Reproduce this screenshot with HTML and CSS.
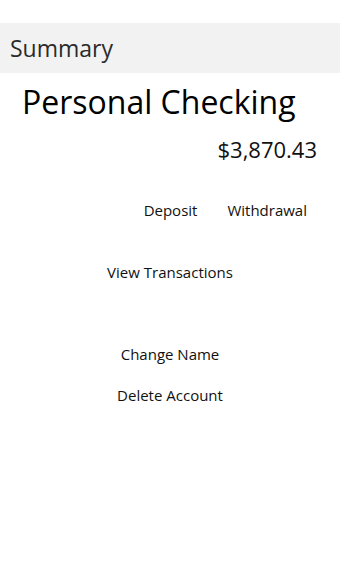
FILE: index.html
```html
<!DOCTYPE html>
<html>
<head>
<meta charset="utf-8">
<link rel="stylesheet" href="styles.css">
</head>
<body>
<div class="page">
  <div class="header"><span class="header-title">Summary</span></div>
  <div class="account-name">Personal Checking</div>
  <div class="balance">$3,870.43</div>
  <div class="actions">
    <span class="link">Deposit</span>
    <span class="link">Withdrawal</span>
  </div>
  <div class="center-link view">View Transactions</div>
  <div class="center-link change">Change Name</div>
  <div class="center-link delete">Delete Account</div>
</div>
</body>
</html>
```
FILE: styles.css
```css
html, body {
  margin: 0;
  padding: 0;
  background: #ffffff;
}
body {
  font-family: "Open Sans", "Noto Sans", sans-serif;
  color: #000;
}
.page {
  width: 340px;
  height: 567px;
  padding-top: 23px;
  box-sizing: border-box;
}
.header {
  height: 50px;
  box-sizing: border-box;
  padding-top: 1px;
  background: #f2f2f2;
  padding-left: 10px;
  line-height: 49px;
}
.header-title {
  font-size: 23px;
  color: #2b2b2b;
}
.account-name {
  margin-top: 9px;
  padding-left: 22px;
  font-size: 32px;
  line-height: 40px;
}
.balance {
  text-align: right;
  padding-right: 23px;
  font-size: 22px;
  line-height: 30px;
  margin-top: 12px;
  color: #111;
}
.actions {
  display: flex;
  justify-content: flex-end;
  gap: 30px;
  padding-right: 33px;
  margin-top: 36px;
  font-size: 15px;
  line-height: 20px;
  color: #111;
}
.center-link {
  text-align: center;
  font-size: 15px;
  line-height: 20px;
  color: #111;
}
.view { margin-top: 42px; }
.change { margin-top: 62px; }
.delete { margin-top: 21px; }
```
